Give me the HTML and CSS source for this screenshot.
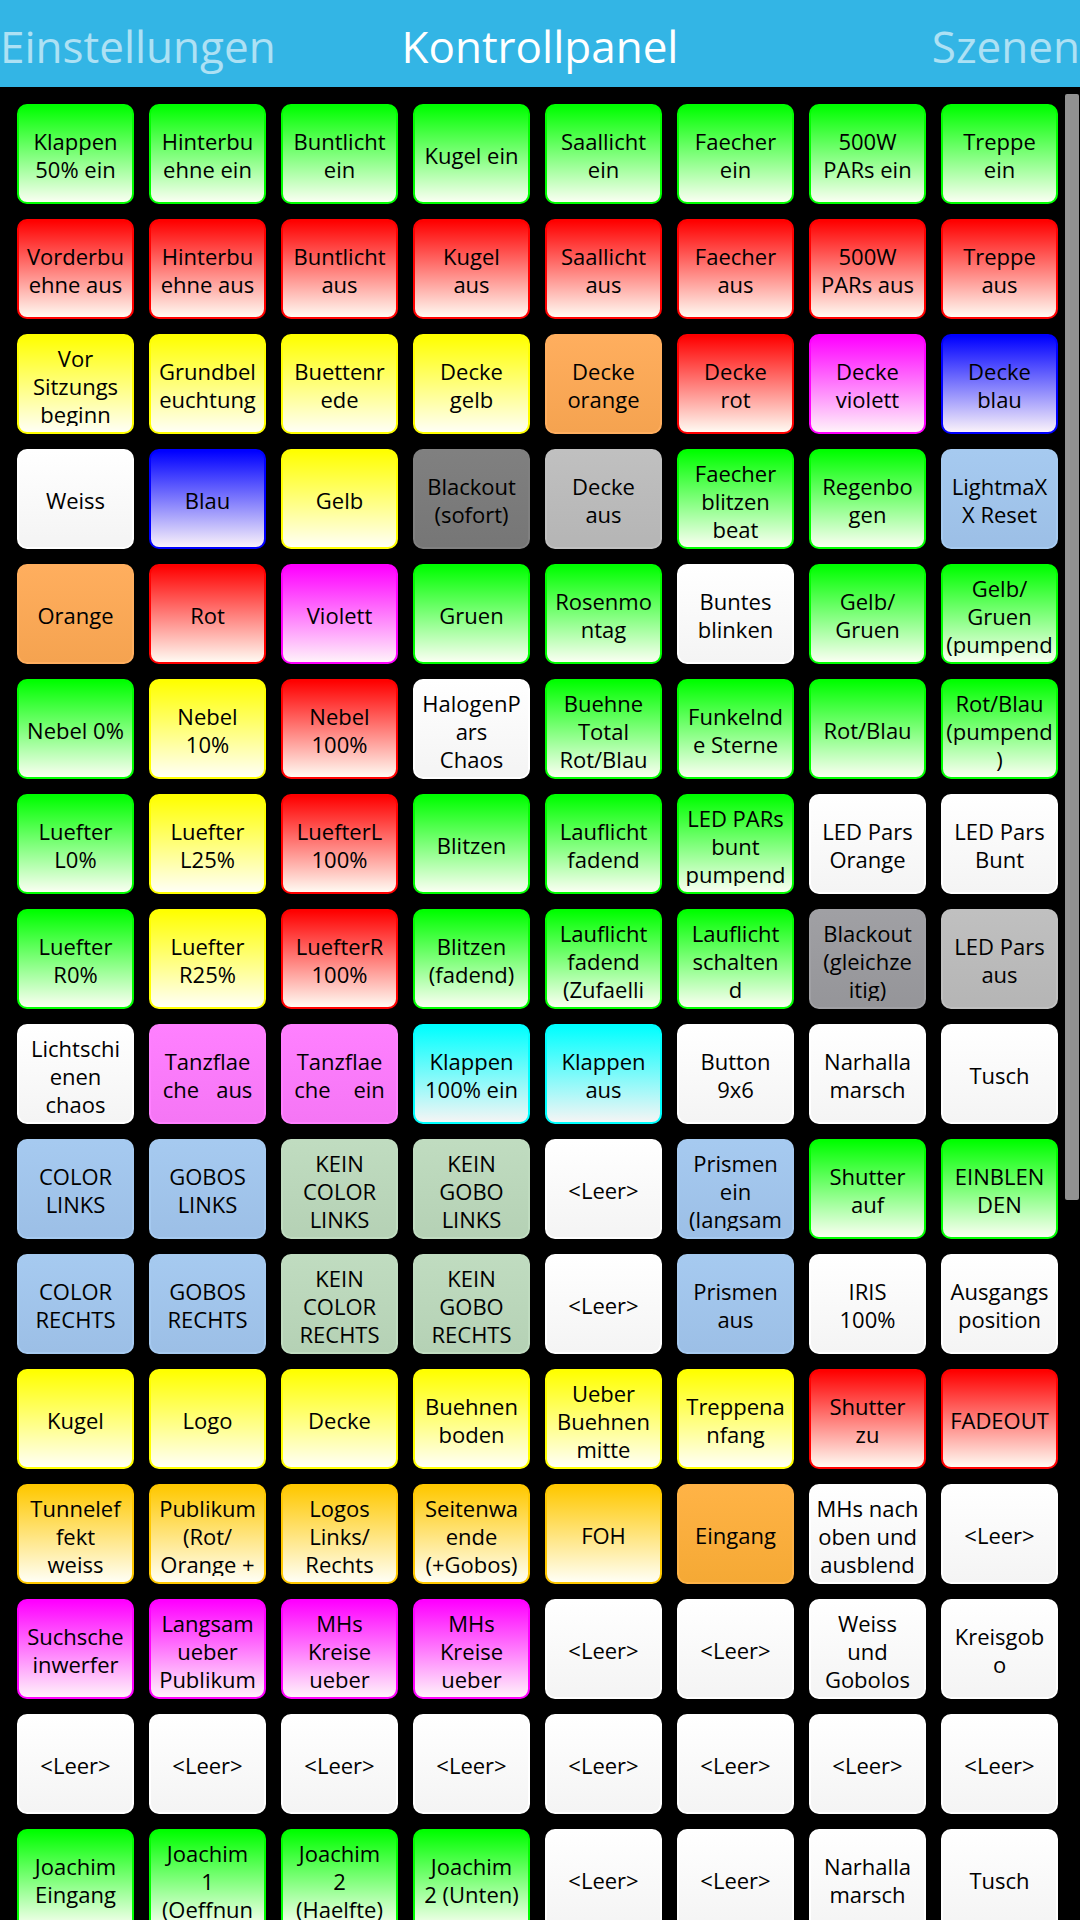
FILE: index.html
```html
<!DOCTYPE html>
<html lang="de">
<head>
<meta charset="utf-8">
<meta name="viewport" content="width=device-width, initial-scale=1">
<title>Kontrollpanel</title>
<link rel="stylesheet" href="styles.css">
</head>
<body>
<div class="app">
<nav class="tabs">
<a class="tab" href="#einstellungen">Einstellungen</a>
<a class="tab tab-current" href="#kontrollpanel" aria-current="page">Kontrollpanel</a>
<a class="tab" href="#szenen">Szenen</a>
</nav>
<main class="panel">
<div class="grid">
<button class="tile green"><span>Klappen<br>50% ein</span></button>
<button class="tile green"><span>Hinterbu<br>ehne ein</span></button>
<button class="tile green"><span>Buntlicht<br>ein</span></button>
<button class="tile green"><span>Kugel ein</span></button>
<button class="tile green"><span>Saallicht<br>ein</span></button>
<button class="tile green"><span>Faecher<br>ein</span></button>
<button class="tile green"><span>500W<br>PARs ein</span></button>
<button class="tile green"><span>Treppe<br>ein</span></button>

<button class="tile red"><span>Vorderbu<br>ehne aus</span></button>
<button class="tile red"><span>Hinterbu<br>ehne aus</span></button>
<button class="tile red"><span>Buntlicht<br>aus</span></button>
<button class="tile red"><span>Kugel<br>aus</span></button>
<button class="tile red"><span>Saallicht<br>aus</span></button>
<button class="tile red"><span>Faecher<br>aus</span></button>
<button class="tile red"><span>500W<br>PARs aus</span></button>
<button class="tile red"><span>Treppe<br>aus</span></button>

<button class="tile yellow"><span>Vor<br>Sitzungs<br>beginn</span></button>
<button class="tile yellow"><span>Grundbel<br>euchtung</span></button>
<button class="tile yellow"><span>Buettenr<br>ede</span></button>
<button class="tile yellow"><span>Decke<br>gelb</span></button>
<button class="tile orange"><span>Decke<br>orange</span></button>
<button class="tile red"><span>Decke<br>rot</span></button>
<button class="tile magenta"><span>Decke<br>violett</span></button>
<button class="tile blue"><span>Decke<br>blau</span></button>

<button class="tile"><span>Weiss</span></button>
<button class="tile blue"><span>Blau</span></button>
<button class="tile yellow"><span>Gelb</span></button>
<button class="tile gray"><span>Blackout<br>(sofort)</span></button>
<button class="tile silver"><span>Decke<br>aus</span></button>
<button class="tile green"><span>Faecher<br>blitzen<br>beat</span></button>
<button class="tile green"><span>Regenbo<br>gen</span></button>
<button class="tile sky"><span>LightmaX<br>X Reset</span></button>

<button class="tile orange"><span>Orange</span></button>
<button class="tile red"><span>Rot</span></button>
<button class="tile magenta"><span>Violett</span></button>
<button class="tile green"><span>Gruen</span></button>
<button class="tile green"><span>Rosenmo<br>ntag</span></button>
<button class="tile"><span>Buntes<br>blinken</span></button>
<button class="tile green"><span>Gelb/<br>Gruen</span></button>
<button class="tile green"><span>Gelb/<br>Gruen<br>(pumpend</span></button>

<button class="tile green"><span>Nebel 0%</span></button>
<button class="tile yellow"><span>Nebel<br>10%</span></button>
<button class="tile red"><span>Nebel<br>100%</span></button>
<button class="tile"><span>HalogenP<br>ars<br>Chaos</span></button>
<button class="tile green"><span>Buehne<br>Total<br>Rot/Blau</span></button>
<button class="tile green"><span>Funkelnd<br>e Sterne</span></button>
<button class="tile green"><span>Rot/Blau</span></button>
<button class="tile green"><span>Rot/Blau<br>(pumpend<br>)</span></button>

<button class="tile green"><span>Luefter<br>L0%</span></button>
<button class="tile yellow"><span>Luefter<br>L25%</span></button>
<button class="tile red"><span>LuefterL<br>100%</span></button>
<button class="tile green"><span>Blitzen</span></button>
<button class="tile green"><span>Lauflicht<br>fadend</span></button>
<button class="tile green"><span>LED PARs<br>bunt<br>pumpend</span></button>
<button class="tile"><span>LED Pars<br>Orange</span></button>
<button class="tile"><span>LED Pars<br>Bunt</span></button>

<button class="tile green"><span>Luefter<br>R0%</span></button>
<button class="tile yellow"><span>Luefter<br>R25%</span></button>
<button class="tile red"><span>LuefterR<br>100%</span></button>
<button class="tile green"><span>Blitzen<br>(fadend)</span></button>
<button class="tile green"><span>Lauflicht<br>fadend<br>(Zufaelli</span></button>
<button class="tile green"><span>Lauflicht<br>schalten<br>d</span></button>
<button class="tile slate"><span>Blackout<br>(gleichze<br>itig)</span></button>
<button class="tile silver"><span>LED Pars<br>aus</span></button>

<button class="tile"><span>Lichtschi<br>enen<br>chaos</span></button>
<button class="tile pink"><span>Tanzflae<br>che   aus</span></button>
<button class="tile pink"><span>Tanzflae<br>che    ein</span></button>
<button class="tile cyan"><span>Klappen<br>100% ein</span></button>
<button class="tile cyan"><span>Klappen<br>aus</span></button>
<button class="tile"><span>Button<br>9x6</span></button>
<button class="tile"><span>Narhalla<br>marsch</span></button>
<button class="tile"><span>Tusch</span></button>

<button class="tile sky"><span>COLOR<br>LINKS</span></button>
<button class="tile sky"><span>GOBOS<br>LINKS</span></button>
<button class="tile sage"><span>KEIN<br>COLOR<br>LINKS</span></button>
<button class="tile sage"><span>KEIN<br>GOBO<br>LINKS</span></button>
<button class="tile"><span>&lt;Leer&gt;</span></button>
<button class="tile sky"><span>Prismen<br>ein<br>(langsam</span></button>
<button class="tile green"><span>Shutter<br>auf</span></button>
<button class="tile green"><span>EINBLEN<br>DEN</span></button>

<button class="tile sky"><span>COLOR<br>RECHTS</span></button>
<button class="tile sky"><span>GOBOS<br>RECHTS</span></button>
<button class="tile sage"><span>KEIN<br>COLOR<br>RECHTS</span></button>
<button class="tile sage"><span>KEIN<br>GOBO<br>RECHTS</span></button>
<button class="tile"><span>&lt;Leer&gt;</span></button>
<button class="tile sky"><span>Prismen<br>aus</span></button>
<button class="tile"><span>IRIS<br>100%</span></button>
<button class="tile"><span>Ausgangs<br>position</span></button>

<button class="tile yellow"><span>Kugel</span></button>
<button class="tile yellow"><span>Logo</span></button>
<button class="tile yellow"><span>Decke</span></button>
<button class="tile yellow"><span>Buehnen<br>boden</span></button>
<button class="tile yellow"><span>Ueber<br>Buehnen<br>mitte</span></button>
<button class="tile yellow"><span>Treppena<br>nfang</span></button>
<button class="tile red"><span>Shutter<br>zu</span></button>
<button class="tile red"><span>FADEOUT</span></button>

<button class="tile amber"><span>Tunnelef<br>fekt<br>weiss</span></button>
<button class="tile amber"><span>Publikum<br>(Rot/<br>Orange +</span></button>
<button class="tile amber"><span>Logos<br>Links/<br>Rechts</span></button>
<button class="tile amber"><span>Seitenwa<br>ende<br>(+Gobos)</span></button>
<button class="tile amber"><span>FOH</span></button>
<button class="tile tangerine"><span>Eingang</span></button>
<button class="tile"><span>MHs nach<br>oben und<br>ausblend</span></button>
<button class="tile"><span>&lt;Leer&gt;</span></button>

<button class="tile magenta"><span>Suchsche<br>inwerfer</span></button>
<button class="tile magenta"><span>Langsam<br>ueber<br>Publikum</span></button>
<button class="tile magenta"><span>MHs<br>Kreise<br>ueber</span></button>
<button class="tile magenta"><span>MHs<br>Kreise<br>ueber</span></button>
<button class="tile"><span>&lt;Leer&gt;</span></button>
<button class="tile"><span>&lt;Leer&gt;</span></button>
<button class="tile"><span>Weiss<br>und<br>Gobolos</span></button>
<button class="tile"><span>Kreisgob<br>o</span></button>

<button class="tile"><span>&lt;Leer&gt;</span></button>
<button class="tile"><span>&lt;Leer&gt;</span></button>
<button class="tile"><span>&lt;Leer&gt;</span></button>
<button class="tile"><span>&lt;Leer&gt;</span></button>
<button class="tile"><span>&lt;Leer&gt;</span></button>
<button class="tile"><span>&lt;Leer&gt;</span></button>
<button class="tile"><span>&lt;Leer&gt;</span></button>
<button class="tile"><span>&lt;Leer&gt;</span></button>

<button class="tile green"><span>Joachim<br>Eingang</span></button>
<button class="tile green"><span>Joachim<br>1<br>(Oeffnun</span></button>
<button class="tile green"><span>Joachim<br>2<br>(Haelfte)</span></button>
<button class="tile green"><span>Joachim<br>2 (Unten)</span></button>
<button class="tile"><span>&lt;Leer&gt;</span></button>
<button class="tile"><span>&lt;Leer&gt;</span></button>
<button class="tile"><span>Narhalla<br>marsch</span></button>
<button class="tile"><span>Tusch</span></button>
</div>
<div class="scroll-thumb"></div>
</main>
</div>
</body>
</html>
```
FILE: styles.css
```css
* {
  box-sizing: border-box;
}

body {
  margin: 0;
  background: #000;
  font-family: "Open Sans", sans-serif;
}

.app {
  display: flex;
  flex-direction: column;
  height: 100vh;
}

/* Pager title strip */
.tabs {
  display: grid;
  grid-template-columns: 1fr auto 1fr;
  align-items: center;
  flex: none;
  padding: 16px 0 11px;
  background: #33b5e5;
}

.tab {
  color: #fff;
  font-size: 44px;
  line-height: 60px;
  text-decoration: none;
  opacity: 0.6;
}

.tab:last-child {
  text-align: right;
}

.tab-current {
  opacity: 1;
}

.panel {
  position: relative;
  flex: 1;
  min-height: 0;
  overflow: hidden;
}

.grid {
  display: grid;
  grid-template-columns: repeat(8, minmax(0, 1fr));
  grid-auto-rows: 100px;
  gap: 15px;
  padding: 17px 22px 17px 17px;
}

.scroll-thumb {
  position: absolute;
  top: 7px;
  right: 1px;
  width: 14px;
  height: 1106px;
  border-radius: 2px;
  background: #919191;
}

/* Tiles fade from their base colour to the end colour */
.tile {
  --base: #fff;
  --end: #f4f4f4;
  padding: 8px 0 6px;
  border: 2px solid var(--base);
  border-radius: 10px;
  background: linear-gradient(var(--base), var(--end));
  color: #000;
  font: inherit;
  font-size: 22px;
  line-height: 28px;
  white-space: pre;
}

.tile span {
  display: grid;
  align-content: safe center;
  justify-content: center;
  height: 82px;
  overflow: hidden;
}

.green { --base: #0f0; --end: #fafff2; }
.red { --base: #f00; --end: #fffaf2; }
.yellow { --base: #ff0; --end: #fffff5; }
.magenta { --base: #f0f; --end: #fff2fa; }
.blue { --base: #00f; --end: #faf2fa; }
.cyan { --base: #0ff; --end: #f5f5f5; }
.amber { --base: #ffc800; --end: #fffff5; }
.orange { --base: #ffae5e; --end: #f5a350; }
.tangerine { --base: #ffb346; --end: #f5a935; }
.gray { --base: #808080; --end: #767676; }
.silver { --base: #c0c0c0; --end: #b5b5b5; }
.slate { --base: #a0a0a4; --end: #959599; }
.sky { --base: #a6caf0; --end: #9cbfe6; }
.sage { --base: #c0dcc0; --end: #b5d1b5; }
.pink { --base: #ff80ff; --end: #f576f5; }
```
